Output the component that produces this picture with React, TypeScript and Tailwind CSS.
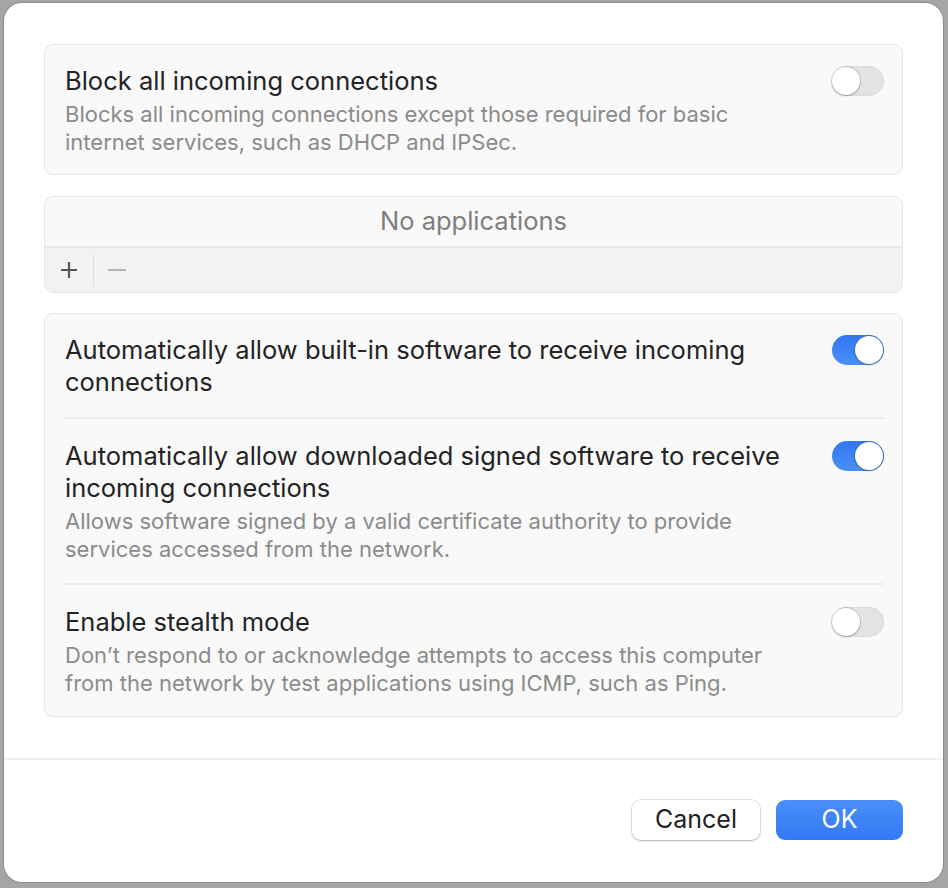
import React from "react";

type ToggleProps = {
  on?: boolean;
};

function Toggle({ on }: ToggleProps) {
  return (
    <div
      className={`relative h-[30px] w-[52px] shrink-0 rounded-full ${
        on
          ? "bg-gradient-to-b from-[#3277f0] to-[#4a8ff8]"
          : "bg-[#e3e3e3] shadow-[inset_0_0_0_1px_rgba(0,0,0,0.04)]"
      }`}
    >
      <div
        className={`absolute top-[1px] h-[28px] w-[28px] rounded-full bg-white shadow-[0_0_0_1px_rgba(0,0,0,0.12),0_1px_2px_rgba(0,0,0,0.25)] ${
          on ? "right-[1px]" : "left-0"
        }`}
      />
    </div>
  );
}

type RowProps = {
  title: React.ReactNode;
  description?: React.ReactNode;
  on?: boolean;
};

function SettingRow({ title, description, on }: RowProps) {
  return (
    <div className="flex items-start justify-between gap-6">
      <div className="flex-1">
        <div className="text-[25.5px] leading-[32px] text-[#232323]">{title}</div>
        {description && (
          <div className="mt-[3px] text-[22px] leading-[28px] text-[#8b8b8b]">
            {description}
          </div>
        )}
      </div>
      <div className="pt-[1px]">
        <Toggle on={on} />
      </div>
    </div>
  );
}

export default function App() {
  return (
    <div
      className="h-[888px] w-[948px] bg-[#a6a4a4] pl-[4px] pt-[3px]"
      style={{ fontFamily: "Inter, 'Noto Sans', sans-serif" }}
    >
      <div className="flex h-[879px] w-[939px] flex-col rounded-[18px] bg-white shadow-[0_0_0_1px_rgba(0,0,0,0.15)]">
        <div className="flex flex-col gap-[21px] px-[40px] pt-[41px]">
          {/* block all */}
          <div className="rounded-[9px] border border-[#e6e6e6] bg-[#f9f9f9] pb-[18px] pl-[20px] pr-[18px] pt-[20px]">
            <SettingRow
              title="Block all incoming connections"
              description={
                <>
                  Blocks all incoming connections except those required for basic
                  <br />
                  internet services, such as DHCP and IPSec.
                </>
              }
            />
          </div>

          {/* applications list */}
          <div className="overflow-hidden rounded-[9px] border border-[#e6e6e6] bg-[#f9f9f9]">
            <div className="flex h-[49px] items-center justify-center text-[25.5px] text-[#7e7e7e]">
              No applications
            </div>
            <div className="flex h-[46px] items-center border-t-2 border-[#e8e8e8] bg-[#f2f2f2] px-[12px]">
              <svg width="24" height="24" viewBox="0 0 24 24" className="text-[#555]">
                <path d="M12 4v16M4 12h16" stroke="currentColor" strokeWidth="2.2" />
              </svg>
              <div className="mx-[12px] h-[32px] w-[1px] bg-[#dcdcdc]" />
              <svg width="22" height="24" viewBox="0 0 22 24" className="text-[#b4b4b4]">
                <path d="M2 12h18" stroke="currentColor" strokeWidth="2" />
              </svg>
            </div>
          </div>

          {/* auto allow */}
          <div className="-mt-[1px] rounded-[9px] border border-[#e6e6e6] bg-[#f9f9f9] pl-[19px] pr-[18px]">
            <div className="pb-[19px] pl-[1px] pt-[20px]">
              <SettingRow
                on
                title={
                  <>
                    Automatically allow built-in software to receive incoming
                    <br />
                    connections
                  </>
                }
              />
            </div>
            <div className="h-[2px] bg-[#ececec]" />
            <div className="pb-[20px] pl-[1px] pt-[21px]">
              <SettingRow
                on
                title={
                  <>
                    Automatically allow downloaded signed software to receive
                    <br />
                    incoming connections
                  </>
                }
                description={
                  <>
                    Allows software signed by a valid certificate authority to provide
                    <br />
                    services accessed from the network.
                  </>
                }
              />
            </div>
            <div className="h-[2px] bg-[#ececec]" />
            <div className="pb-[19px] pl-[1px] pt-[21px]">
              <SettingRow
                title="Enable stealth mode"
                description={
                  <>
                    Don’t respond to or acknowledge attempts to access this computer
                    <br />
                    from the network by test applications using ICMP, such as Ping.
                  </>
                }
              />
            </div>
          </div>
        </div>

        <div className="mt-auto border-t-2 border-[#efefef]">
          <div className="flex justify-end gap-[16px] px-[40px] pb-[42px] pt-[40px]">
            <button className="h-[40px] w-[128px] rounded-[9px] bg-white text-[25px] text-[#222] shadow-[0_0_0_1px_rgba(0,0,0,0.1),0_1px_2px_rgba(0,0,0,0.2)]">
              Cancel
            </button>
            <button className="h-[40px] w-[127px] rounded-[9px] bg-gradient-to-b from-[#4a8ff8] to-[#3478f6] text-[25px] text-white">
              OK
            </button>
          </div>
        </div>
      </div>
    </div>
  );
}
